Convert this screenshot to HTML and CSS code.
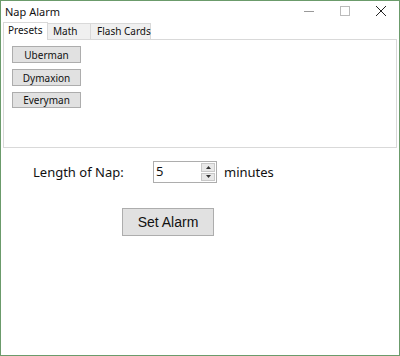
FILE: index.html
```html
<!DOCTYPE html>
<html>
<head>
<meta charset="utf-8">
<link rel="stylesheet" href="styles.css">
</head>
<body>
<div class="window">
  <div class="titlebar">
    <span class="title">Nap Alarm</span>
    <div class="controls">
      <span class="ctl"><svg width="10" height="10" viewBox="0 0 10 10"><path d="M0 5.5H10" stroke="#999" stroke-width="1"/></svg></span>
      <span class="ctl"><svg width="10" height="10" viewBox="0 0 10 10"><rect x="0.5" y="0.5" width="9" height="9" fill="none" stroke="#bbb"/></svg></span>
      <span class="ctl"><svg width="10" height="10" viewBox="0 0 10 10"><path d="M0 0L10 10M10 0L0 10" stroke="#222" stroke-width="1"/></svg></span>
    </div>
  </div>
  <div class="tabs">
    <div class="tab active">Presets</div>
    <div class="tab">Math</div>
    <div class="tab">Flash Cards</div>
  </div>
  <div class="panel">
    <button class="preset">Uberman</button>
    <button class="preset">Dymaxion</button>
    <button class="preset">Everyman</button>
  </div>
  <div class="form">
    <div class="row">
      <span class="label">Length of Nap:</span>
      <div class="spinner">
        <span class="value">5</span>
        <div class="arrows">
          <span class="arrow"><svg width="5" height="3" viewBox="0 0 5 3"><path d="M2.5 0L5 3H0Z" fill="#333"/></svg></span>
          <span class="arrow"><svg width="5" height="3" viewBox="0 0 5 3"><path d="M0 0H5L2.5 3Z" fill="#333"/></svg></span>
        </div>
      </div>
      <span class="unit">minutes</span>
    </div>
    <button class="set">Set Alarm</button>
  </div>
</div>
</body>
</html>
```
FILE: styles.css
```css
* { box-sizing: border-box; }
html, body { margin: 0; padding: 0; }
body { width: 400px; height: 356px; background: #fff; font-family: "Noto Sans", "Open Sans", sans-serif; }
.window {
  width: 400px; height: 356px;
  border: 1px solid #6b9b6b;
  background: #fff;
  display: flex; flex-direction: column;
}
.titlebar {
  height: 20px;
  display: flex; align-items: center; justify-content: space-between;
  padding-left: 4px;
}
.title { font-size: 11px; color: #111; line-height: 1; }
.controls { display: flex; height: 20px; align-items: center; }
.ctl { width: 36px; height: 20px; display: flex; align-items: center; justify-content: center; }
.tabs { display: flex; align-items: flex-end; height: 18px; padding-left: 2px; }
.tab {
  height: 16px;
  padding: 0 0 0 5px;
  font-size: 10px; line-height: 14px;
  white-space: nowrap;
  background: #f0f0f0;
  border: 1px solid #d9d9d9;
  border-bottom: none;
  border-left: none;
  color: #111;
}
.tab:nth-child(2) { width: 43px; }
.tab:nth-child(3) { width: 60px; padding-left: 6px; }
.tab.active {
  height: 18px;
  width: 45px;
  background: #fff;
  border-left: 1px solid #d9d9d9;
  padding-left: 4px;
  line-height: 15px;
  margin-bottom: -1px;
  position: relative;
  z-index: 1;
}
.panel {
  margin: 0 2px 0 2px;
  height: 109px;
  border: 1px solid #d9d9d9;
  display: flex; flex-direction: column; align-items: flex-start;
  gap: 6px;
  padding: 6px 0 0 8px;
}
.preset {
  width: 69px; height: 17px;
  padding: 0;
  font-family: inherit;
  font-size: 10px;
  color: #111;
  background: #e1e1e1;
  border: 1px solid #adadad;
  line-height: 14px;
}
.preset:nth-child(3) { height: 16px; }
.form { display: flex; flex-direction: column; align-items: flex-start; }
.row {
  display: flex; align-items: center;
  margin-top: 13px;
  height: 22px;
}
.label { font-size: 13px; color: #111; margin-left: 32px; width: 120px; }
.spinner {
  width: 64px; height: 22px;
  border: 1px solid #adadad;
  display: flex; align-items: stretch;
  background: #fff;
}
.value { flex: 1; font-size: 13px; line-height: 19px; padding-left: 2px; color: #111; }
.arrows { width: 15px; display: flex; flex-direction: column; padding: 1px 1px 1px 0; gap: 1px; }
.arrow {
  flex: 1; background: #e8e8e8; border: 1px solid #c8c8c8;
  display: flex; align-items: center; justify-content: center;
}
.unit { font-size: 13px; color: #111; margin-left: 7px; }
.set {
  margin-top: 25px; margin-left: 121px;
  width: 92px; height: 28px;
  font-family: "Liberation Sans", Arial, sans-serif;
  font-size: 14px;
  color: #111;
  background: #e1e1e1;
  border: 1px solid #adadad;
  padding: 0;
}
```
